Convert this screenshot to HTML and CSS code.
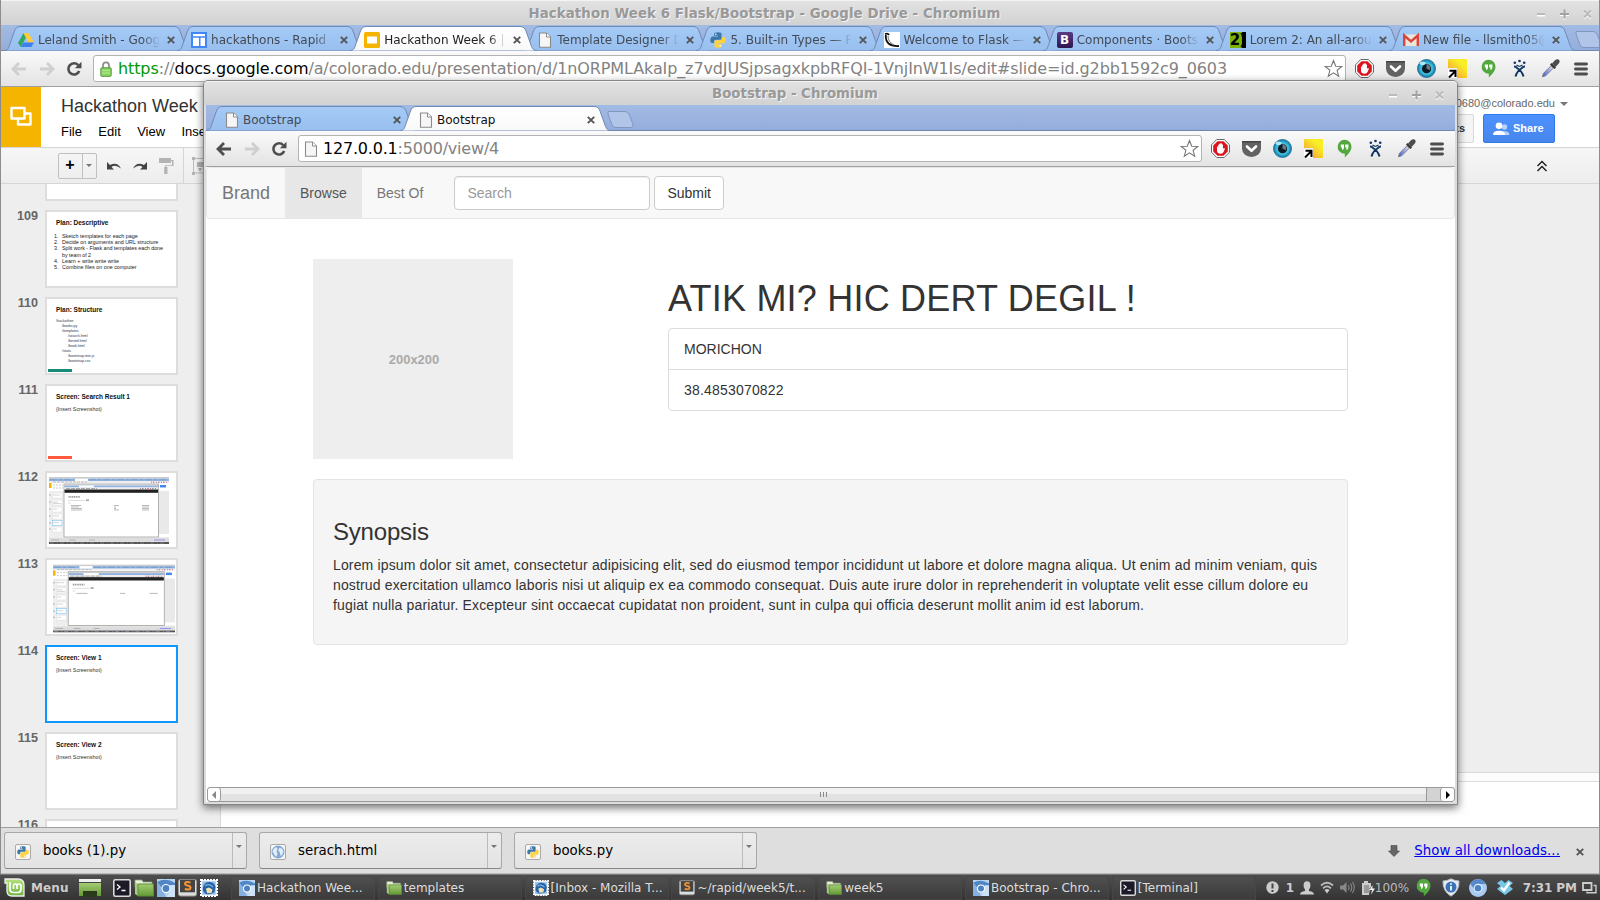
FILE: index.html
```html
<!DOCTYPE html>
<html lang="en">
<head>
<meta charset="utf-8">
<title>Desktop</title>
<link rel="stylesheet" href="styles.css">
</head>
<body>
<svg class="defs" width="0" height="0" aria-hidden="true">
  <defs>
    <linearGradient id="tabBlue" x1="0" y1="0" x2="0" y2="1"><stop offset="0" stop-color="#a5caf7"/><stop offset="1" stop-color="#98bfef"/></linearGradient>
    <linearGradient id="tabWhite" x1="0" y1="0" x2="0" y2="1"><stop offset="0" stop-color="#fff"/><stop offset="1" stop-color="#f9f9f9"/></linearGradient>
    <linearGradient id="fold" x1="0" y1="0" x2="0" y2="1"><stop offset="0" stop-color="#a4cb74"/><stop offset="1" stop-color="#649a35"/></linearGradient>
    <radialGradient id="eye"><stop offset="0" stop-color="#8be4f5"/><stop offset=".7" stop-color="#36b4d8"/><stop offset="1" stop-color="#0c6f9c"/></radialGradient>
    <linearGradient id="yel" x1="1" y1="0" x2="0.1" y2="1"><stop offset=".3" stop-color="#f8ee28"/><stop offset="1" stop-color="#f69532"/></linearGradient>
    <linearGradient id="mint" x1="0" y1="0" x2="0" y2="1"><stop offset="0" stop-color="#b5e27a"/><stop offset="1" stop-color="#6cb33c"/></linearGradient>
    <linearGradient id="pipette" x1="1" y1="0" x2="0" y2="1"><stop offset="0" stop-color="#e8e8f2"/><stop offset="1" stop-color="#3a55d8"/></linearGradient>
  </defs>
  <symbol id="tab-main" viewBox="0 0 187 25"><path d="M0 24.5C4 24.5 4.500 22 5.500 19L10.500 5Q12 .5 16 .5H170Q174.500 .5 176 5L181 19C182.500 23 183 24.500 187 24.500" stroke="#7089b3"/></symbol>
  <symbol id="tab-pop" viewBox="0 0 211 25"><path d="M0 24.5C4 24.5 4.500 22 5.500 19L10.500 5Q12 .5 16 .5H194Q198.500 .5 200 5L205 19C206.500 23 207 24.500 211 24.500" stroke="#7089b3"/></symbol>
  <symbol id="newtab" viewBox="0 0 27 17"><path d="M2 .5H18Q21.500 .5 22.500 4L26 13.500Q26.500 16.500 24 16.500H9Q6 16.500 5 14L1 3Q.3 .5 2 .5Z" fill="#b1c5e8" stroke="#8097c2"/></symbol>
  <symbol id="page" viewBox="0 0 16 16"><path d="M2.500 1H9.500L13.500 5V15.200H2.500Z" fill="#f6f6f6" stroke="#8b8b8b" stroke-width="1.100"/><path d="M9.500 1V5H13.500" fill="#fff" stroke="#8b8b8b"/></symbol>
  <symbol id="close" viewBox="0 0 8 8"><path d="M.8 .8 7.200 7.200M7.200 .8 .8 7.200" stroke="#555" stroke-width="1.900"/></symbol>
  <symbol id="back" viewBox="0 0 16 14"><path d="M8 1 2 7 8 13M2.500 7H15" fill="none" stroke="currentColor" stroke-width="2.800"/></symbol>
  <symbol id="fwd" viewBox="0 0 16 14"><path d="M8 1 14 7 8 13M13.500 7H1" fill="none" stroke="currentColor" stroke-width="2.800"/></symbol>
  <symbol id="reload" viewBox="0 0 16 16"><path d="M12.200 4.200A5.600 5.600 0 1 0 13.200 10" fill="none" stroke="#4e4e4e" stroke-width="2.600"/><path d="M15.500 .8V7.300H8.800Z" fill="#4e4e4e"/></symbol>
  <symbol id="star" viewBox="0 0 19 19"><path d="M9.500 1.500 11.700 7.200 17.800 7.500 13.100 11.300 14.700 17.200 9.500 13.900 4.300 17.200 5.900 11.300 1.200 7.500 7.300 7.200Z" fill="#fff" stroke="#777" stroke-width="1.100"/></symbol>
  <symbol id="adblock" viewBox="0 0 19 19"><path d="M5.800.5H13.200L18.500 5.800V13.200L13.200 18.500H5.800L.5 13.200V5.800Z" fill="#fff" stroke="#666"/><path d="M6.500 2.200H12.500L16.800 6.500V12.500L12.500 16.800H6.500L2.200 12.500V6.500Z" fill="#d9151b"/><path d="M6 7.500V12Q6.500 14.800 9.500 14.800 12 14.800 12.800 12.500L14 9.500 12.500 9 12 10V5.500H10.800V4.300H9.500V4.800H8.200V5.800H7.200V9.500L6.900 7.500Z" fill="#fff"/></symbol>
  <symbol id="pocket" viewBox="0 0 19 19"><path d="M0 2H19V9.500A9.500 8.500 0 0 1 0 9.500Z" fill="#636363"/><path d="M0 2H19V3.500H0Z" fill="#444"/><path d="M5 7.500 9.500 11.800 14 7.500" fill="none" stroke="#fff" stroke-width="2.600" stroke-linecap="round" stroke-linejoin="round"/></symbol>
  <symbol id="ghost" viewBox="0 0 19 19"><circle cx="9.500" cy="9.500" r="9" fill="url(#eye)" stroke="#2a7da0"/><circle cx="9.500" cy="9.700" r="4.600" fill="#101a26"/><path d="M9.500 5V9.700L13 11A4.600 4.600 0 0 0 9.500 5" fill="#6d7c87"/><ellipse cx="5.500" cy="4.300" rx="3" ry="1.800" fill="#caf6ff" opacity=".8"/></symbol>
  <symbol id="arrowbox" viewBox="0 0 19 19"><path d="M0 0H19V19H9V9H0Z" fill="url(#yel)"/><path d="M0 10H9V19H0Z" fill="#fff"/><path d="M1 18.500 7 12.500M1.500 11.800H7.500V18" fill="none" stroke="#000" stroke-width="2"/></symbol>
  <symbol id="hang" viewBox="0 0 19 19"><path d="M9.500 .8A7 7 0 0 1 16.500 7.800C16.500 12 13 15.500 9.800 18.500V14.800A7 7 0 1 1 9.500 .8Z" fill="#52a83e"/><path d="M5.800 5.500H9V8.500Q9 10.500 7 11V8.500H5.800ZM10.200 5.500H13.400V8.500Q13.400 10.500 11.400 11V8.500H10.200Z" fill="#fff"/></symbol>
  <symbol id="jira" viewBox="0 0 19 19"><g fill="#0d3765"><circle cx="4.800" cy="3.800" r="1.300"/><circle cx="9.500" cy="2" r="1.300"/><circle cx="14.200" cy="3.800" r="1.300"/></g><path d="M4 7.500Q6 7.500 7 9 12 12 13.500 17.500M15 7.500Q13 7.500 12 9 7 12 5.500 17.500" fill="none" stroke="#0d3765" stroke-width="2"/><path d="M6.500 6Q9.500 8.500 12.500 6" fill="none" stroke="#0d3765" stroke-width="1.200"/></symbol>
  <symbol id="dropper" viewBox="0 0 19 19"><path d="M1.500 17.800 2.300 14.500 10 6.800 12.300 9.100 4.600 16.800Z" fill="url(#pipette)" stroke="#777" stroke-width=".9"/><path d="M9 5.500 10.500 4 15 8.500 13.500 10Z" fill="#333"/><path d="M11 4.500 14.500 .8Q17 -.3 18.200 1 19 2.500 18 4.200L14.500 8Z" fill="#4c4c4c"/></symbol>
  <symbol id="menu" viewBox="0 0 14 14"><path d="M1.500 2H12.500M1.500 7H12.500M1.500 12H12.500" stroke="#4d4d4d" stroke-width="2.900" stroke-linecap="round"/></symbol>
  <symbol id="wm" viewBox="0 0 60 12"><path d="M1 6.500H9M24 6H33M28.500 1.500V10.500M48 2.500 55 9.500M55 2.500 48 9.500" stroke="#fff" stroke-width="2" transform="translate(0 1)"/><path d="M1 6H9M48 2.500 55 9.500M55 2.500 48 9.500" stroke="#bbb" stroke-width="2"/><path d="M24 6H33M28.500 1.500V10.500" stroke="#a2a2a2" stroke-width="2"/></symbol>
  <symbol id="python" viewBox="0 0 16 16"><path d="M4 2Q4 .3 8 .3T11.500 2V6.500Q11.500 7.800 10 7.800H6Q4 7.800 4 10V11H2.200Q.3 11 .3 8T2.200 4.500H8V3.800H4Z" fill="#3d76a8"/><path d="M12 14Q12 15.700 8 15.700T4.500 14V9.500Q4.500 8.200 6 8.200H10Q12 8.200 12 6V5H13.800Q15.700 5 15.700 8T13.800 11.500H8V12.200H12Z" fill="#fdd23c"/><circle cx="5.800" cy="2.200" r=".8" fill="#fff"/><circle cx="10.200" cy="13.800" r=".8" fill="#fff"/></symbol>
  <symbol id="chromium" viewBox="0 0 18 18"><rect width="18" height="18" fill="#b9d4f0"/><path d="M0 3Q9-2 18 4V7H9L5 9Z" fill="#4f86c6"/><path d="M0 3 6 11 9 18H0Z" fill="#86b0e0"/><path d="M10 18 14 10 13 6H18V18Z" fill="#cde2f8"/><circle cx="9" cy="9.500" r="4.500" fill="#fff"/><circle cx="9" cy="9.500" r="3.400" fill="#4a82c4"/></symbol>
  <symbol id="folder" viewBox="0 0 20 18"><path d="M1 1H8L9 3H18V8H1Z" fill="#e9efe3" stroke="#8ea674" stroke-width=".8"/><path d="M1 3V15L4 17V5Z" fill="#a9c98a"/><path d="M4 5H19.500V17H4Z" fill="url(#fold)" stroke="#5d8e31"/></symbol>
  <symbol id="terminal" viewBox="0 0 18 18"><rect x=".8" y=".8" width="16.400" height="16.400" rx="1.500" fill="#1c1a26" stroke="#d9d9d9" stroke-width="1.600"/><path d="M4 5.500 7 8 4 10.500M8.500 11.500H12.500" fill="none" stroke="#fff" stroke-width="1.300"/></symbol>
  <symbol id="sublime" viewBox="0 0 19 18"><rect x=".5" y=".5" width="18" height="16.500" rx="2" fill="#ddd" stroke="#999"/><rect x="2" y=".8" width="15" height="12.500" fill="#444"/><path d="M12.500 3.500Q7 2 7 4.800 7 6 9.500 6.500 12.500 7 12.500 8.700 12.500 11.500 6.800 10" fill="none" stroke="#f59332" stroke-width="2"/></symbol>
  <symbol id="mail" viewBox="0 0 18 18"><rect x="1" y="1" width="16" height="16" fill="#dce9f5" stroke="#fff" stroke-width="2" stroke-dasharray="2 1"/><rect x="2.500" y="2.500" width="13" height="13" fill="#8fbbe6"/><path d="M3 12Q2 5 8 3 14 2.500 15.500 8L14.500 13Q10 16 6 15Z" fill="#2561a5"/><path d="M6 9.500 9 8.500 12.500 10.500 11.500 14 7 14.300Z" fill="#f0dfb2"/><path d="M5 7Q9 4 13 8" fill="none" stroke="#7fb0e2" stroke-width="1.200"/></symbol>
  <symbol id="minishot" viewBox="0 0 120 67">
    <rect width="120" height="67" fill="#eee"/><rect width="120" height="1.600" fill="#ccc"/><rect y="1.600" width="120" height="2.400" fill="#92b6e4"/><rect x="26" y="1.600" width="13" height="2.400" fill="#fff"/>
    <path d="M1 2.800H25M40 2.800H118" stroke="#6d8bb5" stroke-width=".6" stroke-dasharray="7 2 3 2"/>
    <rect y="6" width="120" height="54" fill="#fff"/><path d="M4 5H38" stroke="#aaa" stroke-width=".7" stroke-dasharray="3 1"/><rect y="6" width="2.500" height="5" fill="#f5b400"/><path d="M4 8H14M4 11H14" stroke="#aaa" stroke-width=".6" stroke-dasharray="2 1"/>
    <rect y="14" width="15" height="46" fill="#eee"/><g fill="#fff" stroke="#ddd" stroke-width=".5"><path d="M3.500 16H13V21H3.500ZM3.500 23H13V28H3.500ZM3.500 30H13V35H3.500ZM3.500 37H13V42H3.500ZM3.500 50H13V55H3.500Z"/></g><rect x="3.500" y="43.500" width="9.500" height="5" fill="#fff" stroke="#7cc3f5" stroke-width=".6"/>
    <path d="M4 18H11M4 25H9M4 26.500H12M4 32H8M4 39H10M4 45.500H10M4 52H8" stroke="#bbb" stroke-width=".6"/>
    <path d="M0 18H1.800M0 25H1.800M0 32H1.800M0 39H1.800M0 46H1.800M0 52H1.800" stroke="#aaa"/>
    <rect x="110" y="14" width="10" height="43" fill="#e9e9e9"/><rect x="111" y="8" width="6" height="2.500" fill="#4787ed"/>
    <rect x="15" y="7" width="94.500" height="53" fill="#fff" stroke="#aaa" stroke-width=".9"/><rect x="15.500" y="7" width="93.500" height="1.500" fill="#ccc"/><rect x="15.500" y="8.500" width="93.500" height="2" fill="#93b4e1"/><rect x="30" y="8.500" width="15" height="2" fill="#fff"/><rect x="15.500" y="10.500" width="93.500" height="2" fill="#eee"/><path d="M17 11.500H48" stroke="#888" stroke-width=".7" stroke-dasharray="4 1"/><rect x="15.500" y="12.500" width="93.500" height="3.300" fill="#222"/>
    <path d="M91 11.500H107M102 5.200H118" stroke="#d66" stroke-dasharray="1 1.500"/><path d="M93 11.500H107M104 5.200H118" stroke="#69b" stroke-dasharray="1 4"/>
    <path d="M19.500 19.800H31" stroke="#999" stroke-width="1.800" stroke-dasharray="1.200 .6"/><path d="M19 23.500H36M19 26H22" stroke="#bbb" stroke-width=".5"/><rect x="37" y="22.300" width="3" height="1.800" fill="#aaa"/>
    <rect y="61" width="120" height="4" fill="#ddd"/><path d="M2 63H10M20 63H27M40 63H46" stroke="#999" stroke-width=".6"/><path d="M105 63H116" stroke="#77f" stroke-width=".7"/><rect y="65" width="120" height="2" fill="#555"/><path d="M1 66H118" stroke="#889" stroke-width=".8" stroke-dasharray="4 3 1 2"/>
  </symbol>
</svg>

<div class="screen">
  <div class="window main-window">
    <div class="titlebar"><span class="wt wt-main">Hackathon Week 6 Flask/Bootstrap - Google Drive - Chromium</span><svg class="wm"><use href="#wm"/></svg></div>
    <div class="tabs">
      <div class="tab"><svg class="shape"><use href="#tab-main"/></svg><svg class="ic" viewBox="0 0 16 16"><path d="M5.500 1 0 11 2.800 15 8 5.500Z" fill="#31a861"/><path d="M5.500 1H10.500L16 10.500H10.500Z" fill="#fdcb3c"/><path d="M5.500 10.500H16L13.300 15H2.800Z" fill="#3e7ff0"/></svg><span class="tt">Leland Smith - Goog</span><svg class="x"><use href="#close"/></svg></div>
      <div class="tab"><svg class="shape"><use href="#tab-main"/></svg><svg class="ic" viewBox="0 0 16 16"><path d="M0 0H16V16H0Z" fill="#4285f4"/><path d="M2 2H14V4.300H2ZM2 5.800H8V14H2ZM9.500 5.800H14V14H9.500Z" fill="#fff"/></svg><span class="tt">hackathons - Rapid</span><svg class="x"><use href="#close"/></svg></div>
      <div class="tab active"><svg class="shape"><use href="#tab-main"/></svg><svg class="ic" viewBox="0 0 16 16"><rect width="16" height="16" rx="1.500" fill="#f4b400"/><path d="M3 4.500H13V11.500H3Z" fill="#fff"/></svg><span class="tt">Hackathon Week 6 |</span><svg class="x"><use href="#close"/></svg></div>
      <div class="tab"><svg class="shape"><use href="#tab-main"/></svg><svg class="ic"><use href="#page"/></svg><span class="tt">Template Designer D</span><svg class="x"><use href="#close"/></svg></div>
      <div class="tab"><svg class="shape"><use href="#tab-main"/></svg><svg class="ic"><use href="#python"/></svg><span class="tt">5. Built-in Types — P</span><svg class="x"><use href="#close"/></svg></div>
      <div class="tab"><svg class="shape"><use href="#tab-main"/></svg><svg class="ic" viewBox="0 0 16 16"><path d="M0 0H16V16H0Z" fill="#fff"/><path d="M1 2Q4 1 5 3M2 3Q1 8 4.500 11.500 8 14.500 15 14" fill="none" stroke="#111" stroke-width="1.800"/><path d="M4 4Q4 10 10 13" fill="none" stroke="#777"/></svg><span class="tt">Welcome to Flask —</span><svg class="x"><use href="#close"/></svg></div>
      <div class="tab"><svg class="shape"><use href="#tab-main"/></svg><span class="ic boot">B</span><span class="tt">Components · Boots</span><svg class="x"><use href="#close"/></svg></div>
      <div class="tab"><svg class="shape"><use href="#tab-main"/></svg><span class="ic lorem">2)</span><span class="tt">Lorem 2: An all-arou</span><svg class="x"><use href="#close"/></svg></div>
      <div class="tab"><svg class="shape"><use href="#tab-main"/></svg><svg class="ic" viewBox="0 0 16 16"><path d="M1 2.500H15V14H1Z" fill="#ece7dc"/><path d="M1.200 14V3.500L8 9.500 14.800 3.500V14" fill="none" stroke="#db4437" stroke-width="2.400"/></svg><span class="tt">New file - llsmith05@</span><svg class="x"><use href="#close"/></svg></div>
      <svg class="newtab"><use href="#newtab"/></svg>
    </div>
    <div class="toolbar">
      <svg class="nav off"><use href="#back"/></svg><svg class="nav off"><use href="#fwd"/></svg><svg class="nav rel"><use href="#reload"/></svg>
      <div class="omni"><svg class="lock" viewBox="0 0 12 16"><path d="M3 8V4.500Q3 1.300 6 1.300T9 4.500V8" fill="none" stroke="#8a8a8a" stroke-width="1.700"/><rect x=".8" y="6.800" width="10.400" height="8.500" rx=".8" fill="#8fd268" stroke="#4f9a35"/><path d="M2 9.500H10M2 12H10" stroke="#b3e592"/></svg><span class="url u-main"><i class="g">https</i>://<b>docs.google.com</b>/a/colorado.edu/presentation/d/1nORPMLAkaIp_z7vdJUSjpsagxkpbRFQI-1VnjInW1Is/edit#slide=id.g2bb1592c9_0603</span><svg class="star"><use href="#star"/></svg></div>
      <div class="exts"><svg><use href="#adblock"/></svg><svg><use href="#pocket"/></svg><svg><use href="#ghost"/></svg><svg><use href="#arrowbox"/></svg><svg><use href="#hang"/></svg><svg><use href="#jira"/></svg><svg><use href="#dropper"/></svg><svg class="menu"><use href="#menu"/></svg></div>
    </div>
    <div class="docs">
      <div class="docs-head">
        <div class="logo"><svg width="24" height="22" viewBox="0 0 24 22"><path d="M2.500 2H15.500V12.500H2.500ZM9 13V18.500H21.500V7.500H16" fill="none" stroke="#fff" stroke-width="2.400" stroke-linejoin="round"/></svg></div>
        <div class="names"><div class="dname">Hackathon Week</div><div class="dmenu"><span>File</span><span>Edit</span><span>View</span><span>Insert</span></div></div>
        <div class="acct"><div class="email">0680@colorado.edu<i class="caret"></i></div><div class="btns"><span class="btn-c">Comments</span><span class="btn-s"><svg width="17" height="14" viewBox="0 0 17 14"><g fill="#b9d1fb"><circle cx="11.500" cy="5" r="2.700"/><path d="M9 13V9.500Q16 8 16.500 13Z"/></g><g fill="#fff"><circle cx="6" cy="3.800" r="3.300"/><path d="M0 13Q0 8.800 6 8.800T12 13Z"/></g></svg>Share</span></div></div>
      </div>
      <div class="docs-tools">
        <div class="plus"><span>+</span><i class="caret"></i></div>
        <svg class="tool t1" viewBox="0 0 16 12"><path d="M1 2V9.500H8L5.500 7Q9 3.800 15 8.500 11.500 1.500 4 5Z" fill="#444"/></svg>
        <svg class="tool t2" viewBox="0 0 16 12"><path d="M15 2V9.500H8L10.500 7Q7 3.800 1 8.500 4.500 1.500 12 5Z" fill="#444"/></svg>
        <svg class="tool t3" viewBox="0 0 15 17"><path d="M0 1H12V6H0ZM12 3H14.500V9H7V11H6V8.300H13V4H12ZM5.200 10H8.500V17H5.200Z" fill="#b4b4b4"/></svg>
        <i class="tsep"></i>
        <svg class="tool t4" viewBox="0 0 18 18"><path d="M1.500 1.500H16V16H1.500Z" fill="none" stroke="#bbb"/><path d="M0 0H3V3H0ZM0 15H3V18H0ZM5 5H12V10H5Z" fill="#b4b4b4"/><path d="M6 11H10L8 15Z" fill="#aaa"/></svg>
        <svg class="chev" viewBox="0 0 12 12"><path d="M1.500 6 6 1.500 10.500 6M1.500 11 6 6.500 10.500 11" fill="none" stroke="#222" stroke-width="1.500"/></svg>
      </div>
      <div class="docs-body">
        <div class="strip">
          <div class="row first"><span class="no"></span><div class="th"></div></div>
          <div class="row"><span class="no">109</span><div class="th"><b>Plan: Descriptive</b><ol><li>Sketch templates for each page</li><li>Decide on arguments and URL structure</li><li class="l3rd">Split work - Flask and templates each done<br>by team of 2</li><li>Learn + write write write</li><li>Combine files on one computer</li></ol></div></div>
          <div class="row"><span class="no">110</span><div class="th"><b>Plan: Structure</b><div class="tree"><p>/hackathon</p><p class="i1">/books.py</p><p class="i1">/templates</p><p class="i2">/search.html</p><p class="i2">/bestof.html</p><p class="i2">/book.html</p><p class="i1">/static</p><p class="i2">/bootstrap.min.js</p><p class="i2">/bootstrap.css</p></div><i class="bar teal"></i></div></div>
          <div class="row"><span class="no">111</span><div class="th"><b>Screen: Search Result 1</b><div class="ins">{Insert Screenshot}</div><i class="bar red"></i></div></div>
          <div class="row"><span class="no">112</span><div class="th"><svg class="shot a" viewBox="0 0 120 67"><use href="#minishot"/><path d="M22 28.500H32M22 30H30M22 31.500H33M22 33H33M65 28.500H70M65 30H67M65 31.500H67M65 33H70M93 28.500H100M93 30H100M93 31.500H100M93 33H100" stroke="#aaa" stroke-width=".8"/></svg></div></div>
          <div class="row"><span class="no">113</span><div class="th"><svg class="shot b" viewBox="0 0 120 67"><use href="#minishot"/><path d="M23 28.500H34M66 28.500H71M95 28.500H103" stroke="#aaa" stroke-width=".8"/></svg></div></div>
          <div class="row"><span class="no">114</span><div class="th sel"><b>Screen: View 1</b><div class="ins">{Insert Screenshot}</div></div></div>
          <div class="row"><span class="no">115</span><div class="th"><b>Screen: View 2</b><div class="ins">{Insert Screenshot}</div></div></div>
          <div class="row"><span class="no">116</span><div class="th"></div></div>
        </div>
        <div class="canvas"><div class="stage"></div><div class="gap"></div><div class="notes"></div></div>
      </div>
    </div>
    <div class="shelf">
      <div class="dl"><span class="dlic"><svg width="12" height="12"><use href="#python"/></svg></span><span class="dn">books (1).py</span><span class="dd"><i class="caret"></i></span></div>
      <div class="dl"><span class="dlic"><svg width="14" height="14" viewBox="0 0 14 14"><circle cx="7" cy="7" r="6.500" fill="#86a9d0"/><path d="M2.500 4 5 2 6.500 4 5.500 6.500 6.500 9 5 12 3 9 1.500 6.500ZM8 3 11 3.500 12.500 6.500 11 10 9.500 11 9 7.500 7.500 6Z" fill="#e3eefa"/></svg></span><span class="dn">serach.html</span><span class="dd"><i class="caret"></i></span></div>
      <div class="dl"><span class="dlic"><svg width="12" height="12"><use href="#python"/></svg></span><span class="dn">books.py</span><span class="dd"><i class="caret"></i></span></div>
      <div class="all"><svg width="12" height="12" viewBox="0 0 12 12"><path d="M3 .5H9V6H11.500L6 11.500 .5 6H3Z" fill="#666" stroke="#444" stroke-width=".6"/></svg><a>Show all downloads...</a><svg class="x"><use href="#close"/></svg></div>
    </div>
  </div>

  <div class="taskbar">
    <div class="launch">
      <svg class="mint" viewBox="0 0 21 19"><path d="M1 1H14Q20 1 20 7V18H8Q3 18 3 13V5H1Z" fill="url(#mint)" stroke="#efefef" stroke-width="1.300"/><path d="M6 4V11Q6 14.500 9.500 14.500H14Q17 14.500 17 11V8Q17 6 15 6T13 8V11M13 8Q13 6 11.200 6T9.500 8V11" fill="none" stroke="#fff" stroke-width="1.700"/></svg>
      <span class="mn">Menu</span>
      <svg class="desk" viewBox="0 0 22 18"><path d="M0 0H22V3H0Z" fill="#eee"/><path d="M0 4H22V17H0Z" fill="url(#fold)"/><path d="M4 12H18V18H4Z" fill="#2a3a1c"/></svg>
      <svg class="l1"><use href="#terminal"/></svg><svg class="l2"><use href="#folder"/></svg><svg class="l1"><use href="#chromium"/></svg><svg class="l3"><use href="#sublime"/></svg><svg class="l1"><use href="#mail"/></svg>
    </div>
    <div class="tasks">
      <div class="task"><svg><use href="#chromium"/></svg>Hackathon Wee...</div>
      <div class="task"><svg><use href="#folder"/></svg>templates</div>
      <div class="task"><svg><use href="#mail"/></svg>[Inbox - Mozilla T...</div>
      <div class="task"><svg><use href="#sublime"/></svg>~/rapid/week5/t...</div>
      <div class="task"><svg><use href="#folder"/></svg>week5</div>
      <div class="task"><svg><use href="#chromium"/></svg>Bootstrap - Chro...</div>
      <div class="task"><svg><use href="#terminal"/></svg>[Terminal]</div>
    </div>
    <div class="tray">
      <svg class="s1" viewBox="0 0 13 13"><circle cx="6.500" cy="6.500" r="6.200" fill="#ccc"/><path d="M6.500 2.500V7.500M6.500 9V11" stroke="#444" stroke-width="2"/></svg>
      <b class="one">1</b>
      <svg class="s2" viewBox="0 0 14 14"><ellipse cx="7" cy="4.500" rx="3.400" ry="4.200" fill="#ccc"/><path d="M0 13.500Q0 10.500 5 10V7H9V10Q14 10.500 14 13.500Z" fill="#ccc"/></svg>
      <svg class="s3" viewBox="0 0 14 13"><path d="M1 4.500Q7-1 13 4.500M3 7.300Q7 3.500 11 7.300" fill="none" stroke="#bbb" stroke-width="1.700"/><path d="M4.500 9Q7 7 9.500 9L7 12.500Z" fill="#ccc"/></svg>
      <svg class="s4" viewBox="0 0 15 13"><path d="M0 4.500H3L6.500 1V12L3 8.500H0Z" fill="#888"/><path d="M8.300 4Q9.800 6.500 8.300 9M10.500 2.500Q13 6.500 10.500 10.500M12.500 1Q16 6.500 12.500 12" fill="none" stroke="#888" stroke-width="1.100"/></svg>
      <svg class="s5" viewBox="0 0 14 14"><path d="M3 0H7V2H10V6L8 8H9L8 14H1V2H3Z" fill="#ccc"/><path d="M3 4H8V12H3Z" fill="#999"/><path d="M11.500 4 8.500 9H11L10 13.500 14 7.500H11.500Z" fill="#eee"/></svg>
      <span class="pct">100%</span>
      <svg class="s6" viewBox="2 0 15 19"><use href="#hang" width="19" height="19"/></svg>
      <svg class="s7" viewBox="0 0 18 19"><path d="M9 .8Q13 3 17 3 17.500 13 9 18.200 .5 13 1 3 5 3 9 .8Z" fill="#e6ecf2" stroke="#b3bcc6"/><circle cx="9" cy="9" r="5.500" fill="#3b72b6"/><path d="M9 8V12.500M9 5.200V6.800" stroke="#fff" stroke-width="1.700"/></svg>
      <svg class="s8" viewBox="0 0 18 18"><circle cx="9" cy="9" r="9" fill="#aacbef"/><path d="M1.300 4.800A9 9 0 0 1 17 5H9L6 11Z" fill="#5689c9"/><circle cx="9" cy="9.200" r="4.400" fill="#e9f3ff"/><circle cx="9" cy="9.200" r="3.300" fill="#4a82c4"/></svg>
      <svg class="s9" viewBox="0 0 16 15"><path d="M0 3 4.500 0 8 3 11.500 0 16 3 12.500 6 16 9 8 15 0 9 3.500 6Z" fill="#77c7e8"/><path d="M4 7.500 7 10.500 12.500 2.500" fill="none" stroke="#fff" stroke-width="2.400"/></svg>
      <b class="clk">7:31 PM</b>
      <svg class="s10" viewBox="0 0 15 12"><path d="M1 1H9.500V8H1Z" fill="none" stroke="#ccc" stroke-width="1.800"/><path d="M11.500 3.500H14V10.800H5V9.500" fill="none" stroke="#ccc" stroke-width="1.400"/></svg>
    </div>
  </div>

  <div class="window popup">
    <div class="titlebar"><span class="wt wt-pop">Bootstrap - Chromium</span><svg class="wm"><use href="#wm"/></svg></div>
    <div class="inner">
      <div class="tabs">
        <div class="tab"><svg class="shape"><use href="#tab-pop"/></svg><svg class="ic"><use href="#page"/></svg><span class="tt">Bootstrap</span><svg class="x"><use href="#close"/></svg></div>
        <div class="tab active"><svg class="shape"><use href="#tab-pop"/></svg><svg class="ic"><use href="#page"/></svg><span class="tt">Bootstrap</span><svg class="x"><use href="#close"/></svg></div>
        <svg class="newtab"><use href="#newtab"/></svg>
      </div>
      <div class="toolbar">
        <svg class="nav"><use href="#back"/></svg><svg class="nav off"><use href="#fwd"/></svg><svg class="nav rel"><use href="#reload"/></svg>
        <div class="omni"><svg class="pg"><use href="#page"/></svg><span class="url u-pop"><b>127.0.0.1</b>:5000/view/4</span><svg class="star"><use href="#star"/></svg></div>
        <div class="exts"><svg><use href="#adblock"/></svg><svg><use href="#pocket"/></svg><svg><use href="#ghost"/></svg><svg><use href="#arrowbox"/></svg><svg><use href="#hang"/></svg><svg><use href="#jira"/></svg><svg><use href="#dropper"/></svg><svg class="menu"><use href="#menu"/></svg></div>
      </div>
      <div class="page">
        <nav class="navbar"><span class="brand">Brand</span><span class="link on">Browse</span><span class="link">Best Of</span><span class="search">Search</span><span class="submit">Submit</span></nav>
        <div class="container">
          <div class="top">
            <div class="ph">200x200</div>
            <div class="info"><h1>ATIK MI? HIC DERT DEGIL !</h1><ul><li>MORICHON</li><li class="num">38.4853070822</li></ul></div>
          </div>
          <div class="well"><h3>Synopsis</h3><p>Lorem ipsum dolor sit amet, consectetur adipisicing elit, sed do eiusmod tempor incididunt ut labore et dolore magna aliqua. Ut enim ad minim veniam, quis nostrud exercitation ullamco laboris nisi ut aliquip ex ea commodo consequat. Duis aute irure dolor in reprehenderit in voluptate velit esse cillum dolore eu fugiat nulla pariatur. Excepteur sint occaecat cupidatat non proident, sunt in culpa qui officia deserunt mollit anim id est laborum.</p></div>
        </div>
      </div>
      <div class="hscroll"><span class="sb l"><i></i></span><span class="thumb"><i></i><i></i><i></i></span><span class="track"></span><span class="sb r"><i></i></span></div>
    </div>
  </div>
</div>
</body>
</html>
```
FILE: styles.css
```css
* { box-sizing: border-box; }
body { margin: 0; background: #ddd; font-family: "DejaVu Sans", sans-serif; }
i, b { font-style: normal; }
svg { flex: none; display: block; }
.defs { position: absolute; }
.screen { position: relative; width: 1600px; height: 900px; overflow: hidden; display: flex; flex-direction: column; }
.main-window { height: 874px; display: flex; flex-direction: column; border-left: 1px solid #8d8d8d; border-right: 1px solid #8d8d8d; overflow: hidden; }
.caret { display: inline-block; border: 4px solid transparent; border-top-color: #777; border-bottom: 0; }

/* window chrome */
.titlebar { height: 25px; flex: none; position: relative; display: flex; align-items: center; justify-content: center; padding-right: 71px; background: linear-gradient(#e2e2e2, #d2d2d2); border-top: 1px solid #f4f4f4; }
.wt { font-weight: bold; font-size: 13.33px; color: #999; text-shadow: 1px 1px 0 #f3f3f3; white-space: nowrap; line-height: 24px; }
.wt-main { letter-spacing: .09px; padding-top: 1px; }
.wm { position: absolute; right: 3px; top: 7px; width: 60px; height: 12px; }
.tabs { height: 26px; flex: none; display: flex; padding: 1px 0 0 3px; background: linear-gradient(#a2bbe4, #95addb); border-bottom: 1px solid #6f88b0; }
.tab { position: relative; z-index: 1; flex: none; width: 187px; height: 25px; margin-right: -13.9px; padding: 0 11px 0 14px; display: flex; align-items: center; color: #434a54; font-size: 12px; }
.shape { position: absolute; left: 0; top: 0; width: 187px; height: 25px; z-index: -1; fill: url(#tabBlue); }
.active { z-index: 3; color: #222; }
.active .shape { fill: url(#tabWhite); }
.ic { width: 16px; height: 16px; flex: none; margin-top: 2px; }
.tt { flex: none; width: 121px; margin-left: 4px; white-space: nowrap; line-height: 18px; padding-top: 2px; -webkit-mask-image: linear-gradient(90deg, #000 104px, transparent 122px); }
.x { width: 8px; height: 8px; margin-left: 8px; margin-top: 2px; }
.boot { background: linear-gradient(#5b3b86, #2c1650); border-radius: 2px; color: #fff; font: bold 12px/16px "DejaVu Sans", sans-serif; text-align: center; }
.lorem { background: linear-gradient(90deg, #7cb305 12px, #000 12px); color: #000; font: bold 15px/16px "DejaVu Sans", sans-serif; overflow: hidden; letter-spacing: -1px; }
.newtab { width: 27px; height: 17px; margin: 5px 0 0 13px; }
.toolbar { height: 36px; flex: none; display: flex; align-items: center; background: linear-gradient(#fafafa, #e3e3e3); border-bottom: 1px solid #a0a0a0; padding-left: 10px; }
.nav { width: 16px; height: 14px; margin-right: 12px; color: #4e4e4e; }
.nav.off { color: #cfcfcf; }
.nav.rel { height: 16px; margin-left: -1px; margin-right: 11px; }
.omni { height: 27px; display: flex; align-items: center; background: #fff; border: 1px solid #b3b3b3; border-radius: 3px; }
.main-window .omni { width: 1253px; padding-left: 6px; }
.lock { width: 12px; height: 16px; margin-right: 6px; }
.pg { width: 16px; height: 16px; margin-right: 4px; }
.url { flex: 1; white-space: nowrap; font-size: 16px; color: #828282; line-height: 24px; }
.u-main { letter-spacing: -.112px; }
.u-pop { letter-spacing: -.2px; }
.url b { font-weight: normal; color: #000; }
.url .g { color: #009900; }
.star { width: 19px; height: 19px; margin-right: 2px; }
.exts { display: flex; align-items: center; margin-left: 9px; gap: 12px; }
.exts svg { width: 19px; height: 19px; }
.exts .menu { width: 14px; height: 14px; margin-left: 2px; }

/* presentation editor */
.docs { flex: 1; min-height: 0; display: flex; flex-direction: column; font-family: "Liberation Sans", Arial, sans-serif; }
.docs-head { height: 60px; flex: none; display: flex; background: #fff; }
.logo { width: 40px; background: #f4b400; display: flex; align-items: center; justify-content: center; }
.names { padding: 8px 0 0 20px; }
.dname { font-size: 18px; line-height: 22px; color: #333; }
.dmenu { margin-top: 6px; font-size: 13px; line-height: 17px; display: flex; gap: 16.4px; }
.acct { margin-left: auto; margin-right: 31px; width: 126px; padding-top: 8px; }
.email { display: flex; justify-content: flex-end; align-items: center; gap: 5px; font-size: 11px; line-height: 17px; color: #666; }
.btns { display: flex; justify-content: flex-end; gap: 9px; margin: 2px 13px 0 0; font-size: 11px; font-weight: bold; line-height: 27px; }
.btn-c { border: 1px solid #d8d8d8; background: #f5f5f5; padding: 0 8px; border-radius: 2px; height: 29px; color: #333; }
.btn-s { border: 1px solid #3079ed; background: linear-gradient(#4d90fe, #4787ed); color: #fff; width: 72px; height: 29px; border-radius: 2px; display: flex; align-items: center; gap: 3px; padding-left: 9px; flex: none; line-height: 25px; }
.docs-tools { height: 37px; flex: none; display: flex; align-items: center; background: linear-gradient(#f6f6f6, #ededed); border-top: 1px solid #d5d5d5; border-bottom: 1px solid #d5d5d5; padding-left: 57px; }
.plus { width: 39px; height: 26px; border: 1px solid #c0c0c0; border-radius: 2px; display: flex; align-items: center; font-size: 16px; font-weight: bold; }
.plus span { width: 24px; padding-right: 1px; text-align: center; border-right: 1px solid #c0c0c0; line-height: 22px; height: 24px; }
.plus .caret { border-width: 3px; border-bottom: 0; margin-left: 3px; }
.tool { height: 12px; width: 16px; }
.t1 { margin-left: 9px; } .t2 { margin-left: 9.500px; }
.t3 { width: 15px; height: 17px; margin-left: 11px; }
.tsep { width: 1px; height: 35px; background: #d5d5d5; margin-left: 9.500px; }
.t4 { width: 18px; height: 18px; margin-left: 8px; }
.chev { width: 12px; height: 12px; margin-left: auto; margin-right: 51px; }
.docs-body { flex: 1; min-height: 0; display: flex; background: #eee; }
.strip { width: 220px; flex: none; overflow: hidden; border-right: 1px solid #d9d9d9; }
.row { display: flex; height: 78px; margin-bottom: 9px; }
.row.first { margin-top: -61px; }
.no { width: 44px; flex: none; padding-right: 7px; text-align: right; font-size: 12.600px; font-weight: bold; color: #666; line-height: 12px; }
.th { position: relative; width: 133px; height: 78px; background: #fff; border: 2px solid #ddd; padding: 7px 0 0 9px; overflow: hidden; }
.th.sel { border-color: #0d97ff; }
.th b { display: block; font-size: 6.500px; line-height: 8px; letter-spacing: -.02px; color: #111; white-space: nowrap; }
.th ol { counter-reset: n; list-style: none; margin: 6px 0 0; padding: 0 0 0 6px; font-size: 5.400px; line-height: 6.200px; color: #222; white-space: nowrap; }
.th li::before { counter-increment: n; content: counter(n) "."; display: inline-block; width: 8px; margin-left: -8px; }
.th .l3rd { letter-spacing: -.05px; }
.ins { margin-top: 5px; font-size: 5.400px; line-height: 7px; color: #333; }
.tree { margin-top: 5px; font-size: 3.600px; line-height: 5px; color: #334; }
.tree p { margin: 0; } .i1 { padding-left: 6px; } .i2 { padding-left: 12px; }
.bar { position: absolute; left: 1px; bottom: 1px; width: 24px; height: 3px; }
.teal { background: #1a8a78; } .red { background: #ff5a3c; }
.shot { position: absolute; }
.shot.a { left: 2px; top: 4px; width: 120px; height: 67px; }
.shot.b { left: 6px; top: 4px; width: 122px; height: 69px; }
.canvas { flex: 1; display: flex; flex-direction: column; }
.stage { height: 589px; border-bottom: 1px solid #d9d9d9; background: #eee; }
.gap { height: 9px; background: #fcfcfc; border-bottom: 1px solid #ddd; }
.notes { flex: 1; background: #fff; }

/* download shelf */
.shelf { height: 47px; flex: none; display: flex; padding: 4px 0 0 3px; background: #dedede; border-top: 1px solid #a0a0a0; gap: 12px; border-bottom: 1px solid #bbb; font-size: 13.33px; }
.dl { width: 243px; height: 37px; border: 1px solid #a8a8a8; border-bottom-color: #888; border-radius: 3px; background: linear-gradient(#ececec, #e3e3e3); display: flex; align-items: center; padding-left: 10px; }
.dlic { width: 16px; height: 16px; border: 1px solid #aaa; border-radius: 2px; background: #f6f6f6; display: flex; align-items: center; justify-content: center; margin-top: 2px; }
.dn { margin-left: 12px; flex: 1; }
.dd { width: 14px; height: 35px; border-left: 1px solid #bbb; padding: 11px 0 0 3px; line-height: 0; }
.dd .caret { border-width: 3.500px; border-bottom: 0; }
.all { margin-left: auto; display: flex; align-items: center; height: 37px; padding-right: 15px; }
.all a { color: #00e; text-decoration: underline; letter-spacing: .08px; margin: 0 8px 0 14px; white-space: nowrap; }

/* panel */
.taskbar { height: 26px; display: flex; align-items: center; background: linear-gradient(#4e4e4e, #333); border-top: 1px solid #777; color: #ddd; font-size: 12px; padding-left: 4px; }
.launch { width: 227px; display: flex; align-items: center; flex: none; }
.mint { width: 21px; height: 19px; }
.mn { font-weight: bold; font-size: 12px; color: #ccc; margin-left: 6px; width: 44px; letter-spacing: .1px; }
.desk { width: 22px; height: 18px; margin: 0 12px 0 4px; }
.l1 { width: 18px; height: 18px; } .l2 { width: 20px; height: 18px; margin: 0 3px; } .l3 { width: 19px; height: 18px; margin: 0 3px; }
.tasks { display: flex; gap: 2.800px; height: 24px; flex: none; }
.task { width: 144px; padding: 1px 0 0 8px; display: flex; align-items: center; gap: 2px; white-space: nowrap; border-radius: 3px 3px 0 0; background: linear-gradient(#505050, #3a3a3a); box-shadow: inset 0 0 0 1px #464646; }
.task svg { width: 16px; height: 16px; }
.tray { display: flex; align-items: center; margin-left: 10px; flex: none; }
.s1 { width: 13px; height: 13px; }
.one { margin-left: 7px; width: 14px; color: #ccc; }
.s2 { width: 14px; height: 14px; }
.s3 { width: 14px; height: 13px; margin-left: 6px; }
.s4 { width: 15px; height: 13px; margin-left: 6px; }
.s5 { width: 14px; height: 14px; margin-left: 6px; }
.pct { width: 41px; color: #bbb; }
.s6 { width: 15px; height: 19px; }
.s7 { width: 18px; height: 19px; margin-left: 11px; }
.s8 { width: 18px; height: 18px; margin-left: 9px; }
.s9 { width: 16px; height: 15px; margin-left: 10px; }
.clk { margin-left: 10px; width: 59px; color: #ccc; white-space: nowrap; letter-spacing: -.1px; }
.s10 { width: 15px; height: 12px; }

/* front window */
.popup { position: absolute; z-index: 10; left: 203px; top: 80px; width: 1255px; height: 725px; background: #dcdcdc; border: 1px solid #858585; border-radius: 5px 5px 0 0; box-shadow: 0 3px 8px rgba(0,0,0,.55); display: flex; flex-direction: column; }
.popup .titlebar { height: 24px; border-radius: 4px 4px 0 0; }
.popup .wm { right: 9px; }
.inner { margin: 0 2px; display: flex; flex-direction: column; height: 697px; background: #fff; }
.popup .tabs { padding-left: 0; }
.popup .tab { width: 211px; margin-right: -17px; padding-left: 18px; }
.popup .shape { width: 211px; }
.popup .tt { width: 150px; margin-left: 3px; -webkit-mask-image: none; }
.popup .x { margin-left: 0; }
.popup .active { color: #111; }
.popup .newtab { margin-left: 13px; }
.popup .omni { width: 904px; padding-left: 4px; }
.page { flex: 1; min-height: 0; font-family: "Liberation Sans", Arial, sans-serif; font-size: 14px; line-height: 20px; color: #333; }
.navbar { height: 52px; display: flex; align-items: center; background: #f8f8f8; border: 1px solid #e7e7e7; border-radius: 4px; color: #777; }
.brand { font-size: 18px; padding: 0 15px; width: 78px; }
.link { height: 50px; line-height: 50px; padding: 0 15px; }
.link.on { background: #e7e7e7; color: #555; }
.search { width: 196px; height: 34px; margin-left: 16px; border: 1px solid #ccc; border-radius: 4px; background: #fff; padding: 6px 12px; color: #999; box-shadow: inset 0 1px 1px rgba(0,0,0,.075); }
.submit { height: 34px; margin-left: 4px; border: 1px solid #ccc; border-radius: 4px; background: #fff; padding: 6px 12px; color: #333; }
.container { padding: 40px 107px 0 107px; }
.top { display: flex; height: 220px; }
.ph { width: 200px; height: 200px; padding: 2px 0 0 2px; background: #eee; color: #aaa; font-weight: bold; font-size: 13px; display: flex; align-items: center; justify-content: center; }
.info { width: 680px; margin-left: 155px; }
h1 { margin: 20px 0 9px; font-size: 36px; line-height: 39.600px; white-space: nowrap; font-weight: normal; letter-spacing: .21px; }
ul { list-style: none; margin: 0; padding: 0; border: 1px solid #ddd; border-radius: 4px; }
.info li { padding: 10px 15px; height: 40px; }
.info li + li { border-top: 1px solid #ddd; height: 41px; }
.num { letter-spacing: .19px; }
.well { height: 166px; background: #f5f5f5; border: 1px solid #e3e3e3; border-radius: 4px; padding: 19px; }
h3 { margin: 20px 0 10px; font-size: 24px; line-height: 26.400px; font-weight: normal; letter-spacing: -.2px; }
.well p { margin: 0 -8px 0 0; letter-spacing: .15px; }
.hscroll { height: 15px; display: flex; border: 1px solid #999; border-radius: 3px; background: #d3d3d3; margin: 0 0 0 1px; }
.sb { width: 14px; background: #fff; display: flex; align-items: center; justify-content: center; }
.sb i { border: 4px solid transparent; }
.sb.l { width: 13px; border-right: 1px solid #999; border-radius: 3px; } .sb.l i { border-right-color: #888; border-left: 0; }
.sb.r { border-left: 1px solid #999; border-radius: 3px; } .sb.r i { border-left-color: #000; border-right: 0; }
.thumb { flex: 1; background: linear-gradient(#f0f0f0 50%, #e2e2e2 50%); display: flex; gap: 2px; align-items: center; justify-content: center; border-right: 1px solid #999; }
.thumb i { width: 1px; height: 5px; background: #888; }
.track { width: 13px; }
```
